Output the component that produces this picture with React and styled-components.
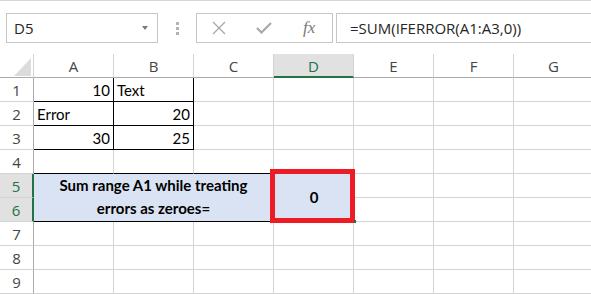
import React from "react";
import styled, { createGlobalStyle } from "styled-components";

const GlobalStyle = createGlobalStyle`
  html, body {
    margin: 0;
    padding: 0;
    background: #ffffff;
    overflow: hidden;
  }
  body {
    font-family: "Open Sans", "Noto Sans", sans-serif;
  }
`;

const Page = styled.div`
  width: 591px;
  height: 294px;
  display: flex;
  flex-direction: column;
  overflow: hidden;
`;

const FormulaBar = styled.div`
  height: 54px;
  border-top: 1px solid #d6d6d6;
  display: flex;
  align-items: flex-start;
  padding: 12px 0 0 6px;
  box-sizing: border-box;
`;

const NameBox = styled.div`
  width: 152px;
  height: 30px;
  box-sizing: border-box;
  border: 1px solid #c6c6c6;
  display: flex;
  align-items: center;
  justify-content: space-between;
  padding: 0 9px 0 7px;
  font-size: 15px;
  color: #262626;
`;

const Arrow = styled.span`
  width: 0;
  height: 0;
  border-left: 3px solid transparent;
  border-right: 3px solid transparent;
  border-top: 4px solid #7a7a7a;
`;

const Grip = styled.div`
  width: 38px;
  height: 30px;
  display: flex;
  flex-direction: column;
  align-items: center;
  justify-content: center;
  gap: 2px;

  span {
    width: 3px;
    height: 3px;
    background: #b4b4b4;
  }
`;

const ButtonBox = styled.div`
  width: 137px;
  height: 30px;
  box-sizing: border-box;
  border: 1px solid #c6c6c6;
  display: flex;
  align-items: center;
  padding-left: 15px;
  gap: 30px;
`;

const Fx = styled.span`
  font-family: "Liberation Serif", "DejaVu Serif", serif;
  font-style: italic;
  font-size: 17px;
  color: #7a7a7a;
  margin-left: 1px;
`;

const FormulaInput = styled.div`
  flex: 1;
  height: 30px;
  margin-left: 3px;
  box-sizing: border-box;
  border: 1px solid #c6c6c6;
  border-right: none;
  display: flex;
  align-items: center;
  padding-left: 13px;
  font-size: 15px;
  color: #262626;
  white-space: nowrap;
`;

const Grid = styled.div`
  display: grid;
  grid-template-columns: 34px repeat(7, 80px);
  grid-template-rows: repeat(10, 24px);
`;

const Corner = styled.div`
  box-sizing: border-box;
  border-right: 1px solid #d4d4d4;
  border-bottom: 1px solid #ababab;
  display: flex;
  align-items: flex-end;
  justify-content: flex-end;
  padding: 0 2px 1px 0;

  &::after {
    content: "";
    width: 17px;
    height: 18px;
    background: #dcdcdc;
    clip-path: polygon(100% 0, 100% 100%, 0 100%);
  }
`;

const ColHead = styled.div`
  box-sizing: border-box;
  border-right: 1px solid #d4d4d4;
  border-bottom: ${(p) => (p.$active ? "2px solid #217346" : "1px solid #ababab")};
  background: ${(p) => (p.$active ? "#e1e1e1" : "#ffffff")};
  color: ${(p) => (p.$active ? "#217346" : "#444444")};
  display: flex;
  align-items: center;
  justify-content: center;
  font-size: 15px;
  padding-top: 1px;
`;

const RowHead = styled.div`
  box-sizing: border-box;
  border-right: ${(p) => (p.$active ? "2px solid #217346" : "1px solid #ababab")};
  border-bottom: 1px solid #d4d4d4;
  background: ${(p) => (p.$active ? "#e1e1e1" : "#ffffff")};
  color: ${(p) => (p.$active ? "#217346" : "#444444")};
  display: flex;
  align-items: center;
  justify-content: center;
  font-size: 15px;
`;

const Cell = styled.div`
  box-sizing: border-box;
  border-right: 1px solid ${(p) => p.$right || "#d4d4d4"};
  border-bottom: 1px solid ${(p) => p.$bottom || "#d4d4d4"};
  display: flex;
  align-items: flex-end;
  justify-content: ${(p) =>
    p.$align === "right" ? "flex-end" : p.$align === "center" ? "center" : "flex-start"};
  padding: 0 3px 2px 3px;
  font-family: Lato, "Open Sans", sans-serif;
  font-size: 15px;
  color: #000000;
`;

const Merged = styled.div`
  grid-column: span ${(p) => p.$cols};
  grid-row: span 2;
  box-sizing: border-box;
  border-right: 1px solid #000000;
  border-bottom: 1px solid #000000;
  background: #dae3f3;
  display: flex;
  align-items: center;
  justify-content: center;
  text-align: center;
  font-family: Lato, "Open Sans", sans-serif;
  font-weight: 700;
  font-size: 15px;
  line-height: 23px;
  color: #000000;
  padding-bottom: 1px;
`;

const Result = styled(Merged)`
  position: relative;
  border: none;
  padding-bottom: 2px;

  /* red highlight frame drawn over the cell edges */
  &::before {
    content: "";
    position: absolute;
    left: -4px;
    right: -1px;
    top: -5px;
    bottom: -1px;
    border: 5px solid #ed1c24;
  }

  &::after {
    content: "";
    position: absolute;
    right: -2px;
    bottom: -1px;
    width: 2px;
    height: 3px;
    background: #217346;
  }
`;

const cols = ["A", "B", "C", "D", "E", "F", "G"];

const table = {
  1: { A: ["10", "right"], B: ["Text", "left"] },
  2: { A: ["Error", "left"], B: ["20", "right"] },
  3: { A: ["30", "right"], B: ["25", "right"] },
};

function CrossIcon() {
  return (
    <svg width="14" height="14" viewBox="0 0 14 14">
      <path d="M1 1 L13 13 M13 1 L1 13" stroke="#a8a8a8" strokeWidth="1.3" fill="none" />
    </svg>
  );
}

function CheckIcon() {
  return (
    <svg width="16" height="12" viewBox="0 0 16 12">
      <path d="M1 6 L5.5 10.5 L15 1" stroke="#a8a8a8" strokeWidth="2.2" fill="none" />
    </svg>
  );
}

function PlainRow({ n }) {
  return (
    <>
      <RowHead>{n}</RowHead>
      {cols.map((c) => {
        const data = table[n] && table[n][c];
        const boxed = n <= 3 && (c === "A" || c === "B");
        const above = n === 4 && (c === "A" || c === "B" || c === "C");
        return (
          <Cell
            key={c}
            $align={data ? data[1] : "left"}
            $right={boxed ? "#000000" : undefined}
            $bottom={boxed || above ? "#000000" : undefined}
          >
            {data ? data[0] : ""}
          </Cell>
        );
      })}
    </>
  );
}

export default function App() {
  return (
    <Page>
      <GlobalStyle />
      <FormulaBar>
        <NameBox>
          D5
          <Arrow />
        </NameBox>
        <Grip>
          <span />
          <span />
          <span />
        </Grip>
        <ButtonBox>
          <CrossIcon />
          <CheckIcon />
          <Fx>fx</Fx>
        </ButtonBox>
        <FormulaInput>=SUM(IFERROR(A1:A3,0))</FormulaInput>
      </FormulaBar>
      <Grid>
        <Corner />
        {cols.map((c) => (
          <ColHead key={c} $active={c === "D"}>
            {c}
          </ColHead>
        ))}
        <PlainRow n={1} />
        <PlainRow n={2} />
        <PlainRow n={3} />
        <PlainRow n={4} />
        <RowHead $active>5</RowHead>
        <Merged $cols={3}>
          Sum range A1 while treating
          <br />
          errors as zeroes=
        </Merged>
        <Result $cols={1}>0</Result>
        <Cell />
        <Cell />
        <Cell />
        <RowHead $active>6</RowHead>
        <Cell />
        <Cell />
        <Cell />
        <PlainRow n={7} />
        <PlainRow n={8} />
        <PlainRow n={9} />
      </Grid>
    </Page>
  );
}
